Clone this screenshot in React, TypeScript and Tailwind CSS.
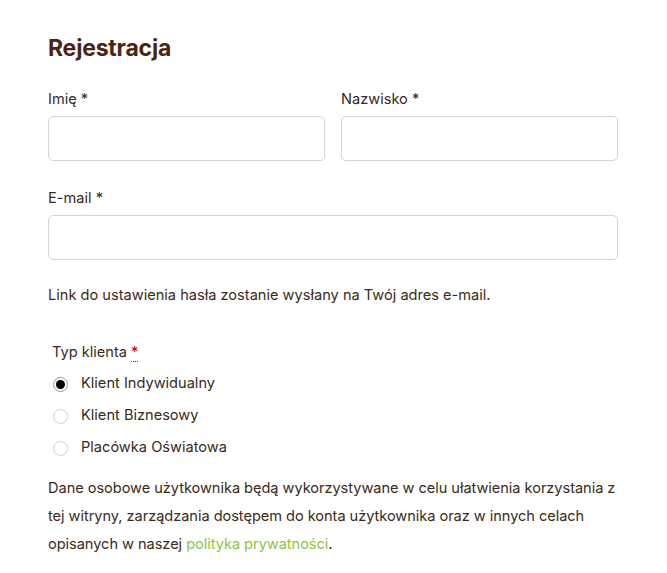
import React, { useState } from "react";

const text = "text-[#3b2a20]";

function Field({ label, className }: { label: string; className?: string }) {
  return (
    <div className={className}>
      <label className={`block text-[14.6px] leading-[22px] ${text} mb-[6px]`}>{label}</label>
      <input
        type="text"
        className="block w-full h-[45px] rounded-[5px] border border-[#d4d4d4] bg-white px-3 outline-none"
      />
    </div>
  );
}

export default function App() {
  const [type, setType] = useState("ind");
  const options = [
    { id: "ind", label: "Klient Indywidualny" },
    { id: "biz", label: "Klient Biznesowy" },
    { id: "edu", label: "Placówka Oświatowa" },
  ];

  return (
    <div className="min-h-[573px] bg-white" style={{ fontFamily: "Inter, 'Noto Sans', sans-serif" }}>
      <div className="w-[570px] ml-[48px] pt-[32px]">
        <h2 className="text-[23px] leading-[32px] font-bold text-[#4a2511] tracking-[-0.2px]">Rejestracja</h2>

        <div className="mt-[24px] grid grid-cols-2 gap-4">
          <Field label="Imię *" />
          <Field label="Nazwisko *" />
        </div>

        <Field label="E-mail *" className="mt-[26px]" />

        <p className={`mt-[23px] text-[14.6px] leading-[24px] ${text}`}>
          Link do ustawienia hasła zostanie wysłany na Twój adres e-mail.
        </p>

        <div className="mt-[33px] pl-[4px]">
          <div className={`text-[14.6px] leading-[24px] ${text}`}>
            Typ klienta{" "}
            <abbr className="text-[#b00] no-underline border-b border-dotted border-[#b00]" title="wymagane">
              *
            </abbr>
          </div>
          <div className="mt-[4px] flex flex-col">
            {options.map((o) => (
              <label key={o.id} className="flex items-center h-[32px] cursor-pointer">
                <span
                  className={`flex items-center justify-center w-[15px] h-[15px] rounded-full border ${
                    type === o.id ? "border-[#9a9a9a]" : "border-[#cfcfcf]"
                  } bg-white ml-[1px] mr-[13px]`}
                  onClick={() => setType(o.id)}
                >
                  {type === o.id && <span className="w-[9px] h-[9px] rounded-full bg-black" />}
                </span>
                <span className={`text-[14.6px] ${text}`}>{o.label}</span>
              </label>
            ))}
          </div>
        </div>

        <p className={`mt-[10px] text-[14.6px] leading-[28px] ${text} tracking-[-0.05px]`}>
          Dane osobowe użytkownika będą wykorzystywane w celu ułatwienia korzystania z tej witryny, zarządzania
          dostępem do konta użytkownika oraz w innych celach opisanych w naszej{" "}
          <a href="#" className="text-[#8cc63f]">
            polityka prywatności
          </a>
          .
        </p>
      </div>
    </div>
  );
}
